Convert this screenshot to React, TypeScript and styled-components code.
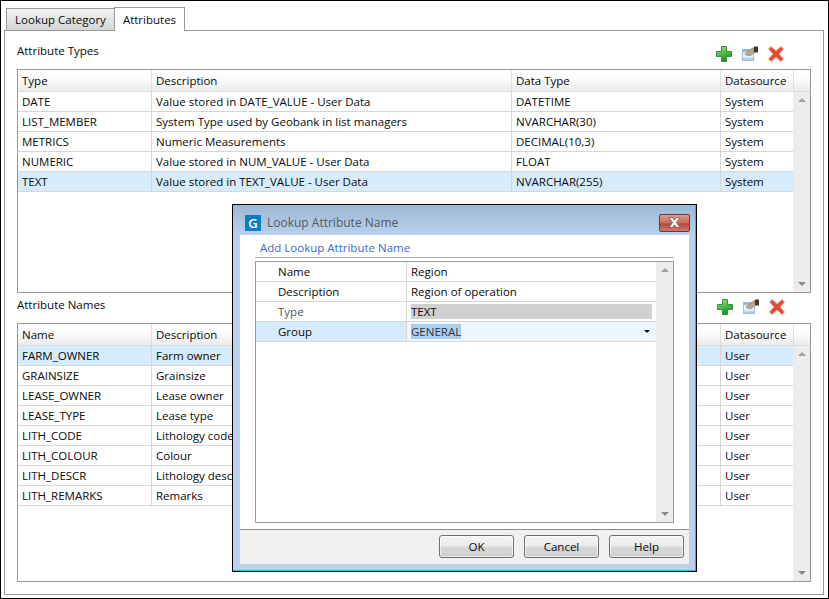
import React from 'react';
import styled, { createGlobalStyle } from 'styled-components';

const GlobalStyle = createGlobalStyle`
  html, body {
    margin: 0;
    padding: 0;
    background: #fff;
  }
  * {
    box-sizing: border-box;
  }
`;

const Window = styled.div`
  position: relative;
  width: 829px;
  height: 599px;
  border: 1px solid #000;
  overflow: hidden;
  background: #fff;
  color: #0a0a0a;
  font-family: "Open Sans", "Noto Sans", sans-serif;
  font-size: 11.5px;
  padding: 0 4px 3px 3px;
  display: flex;
  flex-direction: column;
`;

const TabBar = styled.div`
  display: flex;
  align-items: flex-end;
  height: 29px;
  padding-left: 2px;
`;

const Tab = styled.div<{ $active?: boolean }>`
  height: ${(p) => (p.$active ? '24px' : '22px')};
  width: ${(p) => (p.$active ? '71px' : '109px')};
  margin-bottom: ${(p) => (p.$active ? '-1px' : '0')};
  margin-left: ${(p) => (p.$active ? '-1px' : '0')};
  border: 1px solid #999;
  border-bottom: ${(p) => (p.$active ? 'none' : '0')};
  background: ${(p) => (p.$active ? '#fff' : 'linear-gradient(#f2f2f2, #d6d6d6)')};
  display: flex;
  align-items: center;
  justify-content: center;
  position: relative;
  z-index: 1;
`;

const Pane = styled.div`
  flex: 1;
  border: 1px solid #999;
  padding: 0 12px;
  display: flex;
  flex-direction: column;
`;

const SectionHead = styled.div<{ $h: number; $iconsBottom: number }>`
  height: ${(p) => p.$h}px;
  display: flex;
  justify-content: space-between;
  align-items: flex-end;
  padding-bottom: ${(p) => p.$iconsBottom}px;
`;

const SectionTitle = styled.div<{ $up: number }>`
  margin-bottom: ${(p) => p.$up}px;
`;

const Tools = styled.div<{ $right: number }>`
  display: flex;
  align-items: center;
  gap: 8px;
  margin-right: ${(p) => p.$right}px;
`;

const Table = styled.div<{ $h: number }>`
  height: ${(p) => p.$h}px;
  border: 1px solid #999;
  display: flex;
  flex-direction: column;
`;

const HeadRow = styled.div`
  height: 22px;
  flex: none;
  display: grid;
  grid-template-columns: 134px 360px 209px 73px 1fr;
  background: linear-gradient(#fff, #fbfbfb 45%, #ebebeb);
  border-bottom: 1px solid #dcdcdc;
`;

const HeadCell = styled.div`
  padding: 0 0 0 4px;
  line-height: 21px;
  border-right: 1px solid #e0e0e0;
  white-space: nowrap;
  overflow: hidden;

  &:last-child {
    border-right: none;
  }
`;

const Body = styled.div`
  flex: 1;
  display: flex;
  min-height: 0;
`;

const Rows = styled.div`
  flex: 1;
  min-width: 0;
`;

const Row = styled.div<{ $selected?: boolean }>`
  height: 20px;
  display: grid;
  grid-template-columns: 134px 360px 209px 1fr;
  border-bottom: 1px solid #d6d6d6;
  background: ${(p) => (p.$selected ? '#d6ebfb' : '#fff')};
`;

const Cell = styled.div`
  padding-left: 4px;
  line-height: 19px;
  border-right: 1px solid #d6d6d6;
  white-space: nowrap;
  overflow: hidden;

  &:last-child {
    border-right: none;
  }
`;

const ScrollTrack = styled.div`
  width: 17px;
  flex: none;
  background: #ececec;
  display: flex;
  flex-direction: column;
  justify-content: space-between;
  align-items: center;
  padding: 6px 0;
`;

const ArrowUp = styled.div`
  width: 0;
  height: 0;
  border-left: 4px solid transparent;
  border-right: 4px solid transparent;
  border-bottom: 4px solid #a0a0a0;
`;

const ArrowDown = styled.div`
  width: 0;
  height: 0;
  border-left: 4px solid transparent;
  border-right: 4px solid transparent;
  border-top: 4px solid #8a8a8a;
`;

const Dialog = styled.div`
  position: absolute;
  left: 231px;
  top: 203px;
  width: 465px;
  height: 368px;
  border: 1px solid #000;
  background: linear-gradient(#9db8d5, #b9d1ea 30px);
  box-shadow: inset -1px -1px 0 #2fb7d6;
  padding: 0 7px 7px;
  display: flex;
  flex-direction: column;
`;

const TitleBar = styled.div`
  height: 30px;
  flex: none;
  display: flex;
  align-items: center;
  padding: 5px 0 0 5px;
`;

const AppBadge = styled.div`
  width: 16px;
  height: 16px;
  background: #0f7dc2;
  color: #fff;
  font-weight: 600;
  font-size: 13px;
  line-height: 16px;
  text-align: center;
  margin-right: 6px;
`;

const TitleText = styled.div`
  flex: 1;
  color: #4f5a66;
  font-size: 12px;
`;

const CloseButton = styled.div`
  width: 31px;
  height: 18px;
  margin-right: -1px;
  border: 1px solid #6d3a36;
  border-radius: 2px;
  background: linear-gradient(#dc9a90, #c9695c 50%, #b4483a 55%, #cc7a6c);
  display: flex;
  align-items: center;
  justify-content: center;
`;

const Client = styled.div`
  flex: 1;
  background: #fff;
  display: flex;
  flex-direction: column;
  min-height: 0;
`;

const DialogHead = styled.div`
  height: 23px;
  margin: 0 15px;
  padding-left: 5px;
  border-bottom: 1px solid #aaa;
  color: #3b67cf;
  line-height: 25px;
  flex: none;
`;

const PropGrid = styled.div`
  flex: 1;
  margin: 3px 15px 6px;
  border: 1px solid #999;
  display: flex;
  min-height: 0;
`;

const PropRow = styled.div<{ $selected?: boolean }>`
  height: 20px;
  display: grid;
  grid-template-columns: 151px 1fr;
  border-bottom: 1px solid #d6d6d6;
  background: ${(p) => (p.$selected ? 'linear-gradient(90deg, #d6ebfb 151px, #eff7fe 151px)' : '#fff')};
`;

const PropName = styled.div<{ $muted?: boolean }>`
  padding-left: 22px;
  line-height: 19px;
  border-right: 1px solid #d6d6d6;
  color: ${(p) => (p.$muted ? '#555' : '#0a0a0a')};
`;

const PropValue = styled.div`
  padding-left: 4px;
  line-height: 19px;
  display: flex;
  align-items: center;
  justify-content: space-between;
  padding-right: 6px;
`;

const ReadOnlyValue = styled.div`
  flex: 1;
  height: 15px;
  margin-right: -2px;
  background: #d0d0d0;
  line-height: 15px;
`;

const SelectedText = styled.span`
  background: #a9cfef;
  color: #333;
  height: 15px;
  line-height: 15px;
`;

const Caret = styled.div`
  width: 0;
  height: 0;
  border-left: 3px solid transparent;
  border-right: 3px solid transparent;
  border-top: 3px solid #111;
`;

const Footer = styled.div`
  height: 35px;
  flex: none;
  border-top: 1px solid #8a8a8a;
  background: #f0f0f0;
  display: flex;
  justify-content: flex-end;
  gap: 10px;
  padding: 5px 5px 0;
`;

const Button = styled.div`
  width: 75px;
  height: 23px;
  border: 1px solid #707070;
  border-radius: 3px;
  background: linear-gradient(#f4f4f4, #ebebeb 48%, #d8d8d8 52%, #cfcfcf);
  box-shadow: inset 0 0 0 1px rgba(255, 255, 255, 0.6);
  display: flex;
  align-items: center;
  justify-content: center;
`;

const PlusIcon = () => (
  <svg width="18" height="18" viewBox="0 0 18 18">
    <defs>
      <linearGradient id="plusFill" x1="0" y1="0" x2="0.4" y2="1">
        <stop offset="0" stopColor="#a4e483" />
        <stop offset="0.55" stopColor="#4fbd45" />
        <stop offset="1" stopColor="#1b8f2a" />
      </linearGradient>
    </defs>
    <path d="M6.500 1.500h5v5h5v5h-5v5h-5v-5h-5v-5h5z" fill="url(#plusFill)" stroke="#3a8f42" strokeWidth="1" />
  </svg>
);

const EditIcon = () => (
  <svg width="18" height="18" viewBox="0 0 18 18">
    <defs>
      <linearGradient id="docFill" x1="0" y1="0" x2="0" y2="1">
        <stop offset="0" stopColor="#5f9fd8" />
        <stop offset="0.35" stopColor="#e4f0fa" />
        <stop offset="0.6" stopColor="#f4f9fd" />
        <stop offset="1" stopColor="#8fbde6" />
      </linearGradient>
    </defs>
    <rect x="1.500" y="4.500" width="11" height="11" fill="url(#docFill)" stroke="#a3bfd8" />
    <path d="M4 9.500L8 5l5-2.500V7.500L10 10.500H6.500z" fill="#bda58c" stroke="#85705a" strokeWidth="0.5" />
    <path d="M13 1.500h4v6h-4z" fill="#3d3a36" />
  </svg>
);

const DeleteIcon = () => (
  <svg width="18" height="18" viewBox="0 0 18 18">
    <path
      d="M4 1.500L9 6l5-4.500L16.500 4 12 9l4.500 5-2.500 2.500L9 12l-5 4.500L1.500 14 6 9 1.500 4z"
      fill="#e2492f"
      stroke="#f3a394"
      strokeWidth="1"
    />
  </svg>
);

const CloseGlyph = () => (
  <svg width="15" height="11" viewBox="0 0 15 11">
    <path d="M2 .5h3.500L7.500 3 9.500.5H13L9.500 5.500 13 10.500H9.500L7.500 8 5.500 10.500H2l3.500-5z" fill="#f2f2f2" stroke="#6b3a36" strokeWidth="0.6" />
  </svg>
);

const typeRows = [
  ['DATE', 'Value stored in DATE_VALUE - User Data', 'DATETIME', 'System'],
  ['LIST_MEMBER', 'System Type used by Geobank in list managers', 'NVARCHAR(30)', 'System'],
  ['METRICS', 'Numeric Measurements', 'DECIMAL(10,3)', 'System'],
  ['NUMERIC', 'Value stored in NUM_VALUE - User Data', 'FLOAT', 'System'],
  ['TEXT', 'Value stored in TEXT_VALUE - User Data', 'NVARCHAR(255)', 'System'],
];

const nameRows = [
  ['FARM_OWNER', 'Farm owner'],
  ['GRAINSIZE', 'Grainsize'],
  ['LEASE_OWNER', 'Lease owner'],
  ['LEASE_TYPE', 'Lease type'],
  ['LITH_CODE', 'Lithology code'],
  ['LITH_COLOUR', 'Colour'],
  ['LITH_DESCR', 'Lithology description'],
  ['LITH_REMARKS', 'Remarks'],
];

const Toolbar = ({ right }: { right: number }) => (
  <Tools $right={right}>
    <PlusIcon />
    <EditIcon />
    <DeleteIcon />
  </Tools>
);

const Scrollbar = () => (
  <ScrollTrack>
    <ArrowUp />
    <ArrowDown />
  </ScrollTrack>
);

const App: React.FC = () => {
  return (
    <Window>
      <GlobalStyle />
      <TabBar>
        <Tab>Lookup Category</Tab>
        <Tab $active>Attributes</Tab>
      </TabBar>
      <Pane>
        <SectionHead $h={38} $iconsBottom={6}>
          <SectionTitle $up={5}>Attribute Types</SectionTitle>
          <Toolbar right={26} />
        </SectionHead>
        <Table $h={224}>
          <HeadRow>
            <HeadCell>Type</HeadCell>
            <HeadCell>Description</HeadCell>
            <HeadCell>Data Type</HeadCell>
            <HeadCell>Datasource</HeadCell>
            <HeadCell />
          </HeadRow>
          <Body>
            <Rows>
              {typeRows.map((r, i) => (
                <Row key={r[0]} $selected={i === 4}>
                  {r.map((c) => (
                    <Cell key={c}>{c}</Cell>
                  ))}
                </Row>
              ))}
            </Rows>
            <Scrollbar />
          </Body>
        </Table>
        <SectionHead $h={30} $iconsBottom={7}>
          <SectionTitle $up={4}>Attribute Names</SectionTitle>
          <Toolbar right={25} />
        </SectionHead>
        <Table $h={259}>
          <HeadRow>
            <HeadCell>Name</HeadCell>
            <HeadCell>Description</HeadCell>
            <HeadCell>Data Type</HeadCell>
            <HeadCell>Datasource</HeadCell>
            <HeadCell />
          </HeadRow>
          <Body>
            <Rows>
              {nameRows.map((r, i) => (
                <Row key={r[0]} $selected={i === 0}>
                  <Cell>{r[0]}</Cell>
                  <Cell>{r[1]}</Cell>
                  <Cell>NVARCHAR(255)</Cell>
                  <Cell>User</Cell>
                </Row>
              ))}
            </Rows>
            <Scrollbar />
          </Body>
        </Table>
      </Pane>

      <Dialog>
        <TitleBar>
          <AppBadge>G</AppBadge>
          <TitleText>Lookup Attribute Name</TitleText>
          <CloseButton>
            <CloseGlyph />
          </CloseButton>
        </TitleBar>
        <Client>
          <DialogHead>Add Lookup Attribute Name</DialogHead>
          <PropGrid>
            <Rows>
              <PropRow>
                <PropName>Name</PropName>
                <PropValue>Region</PropValue>
              </PropRow>
              <PropRow>
                <PropName>Description</PropName>
                <PropValue>Region of operation</PropValue>
              </PropRow>
              <PropRow>
                <PropName $muted>Type</PropName>
                <PropValue>
                  <ReadOnlyValue>TEXT</ReadOnlyValue>
                </PropValue>
              </PropRow>
              <PropRow $selected>
                <PropName>Group</PropName>
                <PropValue>
                  <SelectedText>GENERAL</SelectedText>
                  <Caret />
                </PropValue>
              </PropRow>
            </Rows>
            <Scrollbar />
          </PropGrid>
          <Footer>
            <Button>OK</Button>
            <Button>Cancel</Button>
            <Button>Help</Button>
          </Footer>
        </Client>
      </Dialog>
    </Window>
  );
};

export default App;
